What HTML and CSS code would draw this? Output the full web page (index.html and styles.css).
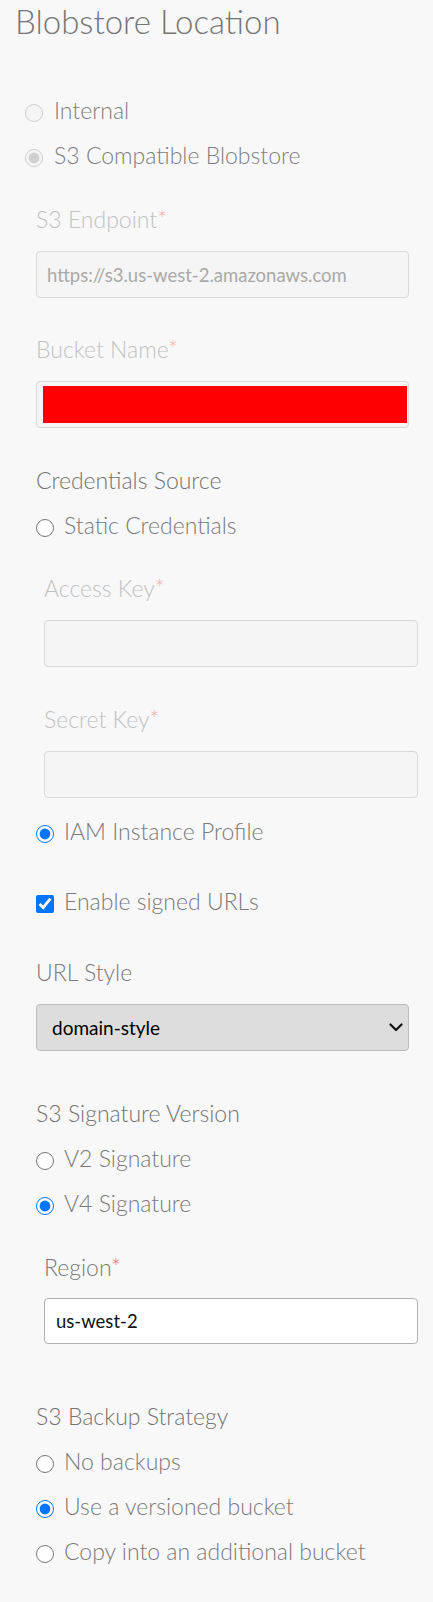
FILE: index.html
```html
<!DOCTYPE html>
<html lang="en">
<head>
<meta charset="utf-8">
<title>Blobstore Location</title>
<link rel="stylesheet" href="styles.css">
</head>
<body>
<div class="page">
  <h2 class="title">Blobstore Location</h2>

  <div class="location">
    <label class="choice is-disabled"><input type="radio" name="loc" disabled><span>Internal</span></label>
    <label class="choice is-disabled gap-15"><input type="radio" name="loc" checked disabled><span>S3 Compatible Blobstore</span></label>
  </div>

  <div class="s3">
    <div class="field is-disabled">
      <label class="field-label">S3 Endpoint<span class="req">*</span></label>
      <input class="text-input" type="text" value="https://s3.us-west-2.amazonaws.com" disabled>
    </div>

    <div class="field is-disabled gap-36">
      <label class="field-label">Bucket Name<span class="req">*</span></label>
      <div class="redacted-wrap">
        <input class="text-input" type="text" value="" disabled>
        <div class="redacted"></div>
      </div>
    </div>

    <div class="group-label gap-37">Credentials Source</div>
    <label class="choice gap-15"><input type="radio" name="cred"><span>Static Credentials</span></label>

    <div class="sub">
      <div class="field is-disabled gap-33">
        <label class="field-label">Access Key<span class="req">*</span></label>
        <input class="text-input" type="text" disabled>
      </div>
      <div class="field is-disabled gap-37">
        <label class="field-label">Secret Key<span class="req">*</span></label>
        <input class="text-input" type="password" disabled>
      </div>
    </div>

    <label class="choice gap-18"><input type="radio" name="cred" checked><span>IAM Instance Profile</span></label>

    <label class="choice check gap-40"><input type="checkbox" checked><span>Enable signed URLs</span></label>

    <div class="field gap-41">
      <label class="field-label">URL Style</label>
      <div class="select-wrap">
        <select class="select-input">
          <option selected>domain-style</option>
          <option>path-style</option>
        </select>
        <svg class="select-arrow" width="14" height="9" viewBox="0 0 14 9" aria-hidden="true"><path d="M1.5 1.5 L7 7 L12.5 1.5" fill="none" stroke="#111" stroke-width="2.2" stroke-linecap="round" stroke-linejoin="round"/></svg>
      </div>
    </div>

    <div class="group-label gap-47">S3 Signature Version</div>
    <label class="choice gap-15"><input type="radio" name="sig"><span>V2 Signature</span></label>
    <label class="choice gap-15"><input type="radio" name="sig" checked><span>V4 Signature</span></label>

    <div class="sub">
      <div class="field region gap-34">
        <label class="field-label">Region<span class="req req-strong">*</span></label>
        <input class="text-input is-active" type="text" value="us-west-2">
      </div>
    </div>

    <div class="group-label gap-57">S3 Backup Strategy</div>
    <label class="choice gap-15"><input type="radio" name="bk"><span>No backups</span></label>
    <label class="choice gap-15"><input type="radio" name="bk" checked><span>Use a versioned bucket</span></label>
    <label class="choice gap-15"><input type="radio" name="bk"><span>Copy into an additional bucket</span></label>
  </div>
</div>
</body>
</html>
```
FILE: styles.css
```css
html, body {
  margin: 0;
  padding: 0;
  background: #f8f8f8;
}

body {
  font-family: "Lato", "Source Sans Pro", "Liberation Sans", sans-serif;
  font-weight: 300;
  color: #7a7a7a;
}

.page {
  padding-top: 1px;
  padding-bottom: 40px;
}

.title {
  margin: 0 0 0 15px;
  font-size: 33px;
  line-height: 40px;
  font-weight: 300;
  color: #757575;
}

.location {
  margin: 54px 0 0 25px;
}

.choice {
  display: flex;
  align-items: flex-start;
  height: 30px;
  font-size: 23px;
  line-height: 30px;
  white-space: nowrap;
}

.choice input {
  flex: none;
  width: 18px;
  height: 18px;
  margin: 8.5px 10px 0 0;
}

.location .choice input {
  margin-right: 11px;
}

.choice.check input {
  margin-top: 9px;
  accent-color: #0075ff;
}

.choice.is-disabled {
  color: #7e7e7e;
}

.s3 {
  margin: 34px 0 0 36px;
  width: 373px;
}

.sub {
  margin-left: 8px;
  width: 374px;
}

.field-label {
  display: block;
  font-size: 23px;
  line-height: 30px;
  margin-bottom: 17px;
  color: #7a7a7a;
}

.field.is-disabled .field-label {
  color: #c2c2c2;
}

.req {
  color: #e86a6a;
}

.field.is-disabled .req {
  color: #f4abab;
}

.group-label {
  font-size: 23px;
  line-height: 30px;
  color: #737373;
}

.text-input {
  display: block;
  box-sizing: border-box;
  width: 100%;
  height: 47px;
  margin: 0;
  padding: 0 10px;
  border: 1px solid #d9d9d9;
  border-radius: 4px;
  background: #f5f5f5;
  font-family: "Lato", sans-serif;
  font-weight: 400;
  font-size: 18.5px;
  color: #a9a9a9;
  outline: none;
}

.text-input.is-active {
  background: #ffffff;
  border-color: #b3b3b3;
  color: #111111;
  padding-left: 11px;
}

.region .field-label {
  margin-bottom: 16px;
}

.region .text-input {
  height: 46px;
}

.redacted-wrap {
  position: relative;
}

.redacted {
  position: absolute;
  left: 7px;
  right: 2px;
  top: 5px;
  bottom: 5px;
  background: #ff0000;
}

.select-wrap {
  position: relative;
}

.select-input {
  display: block;
  box-sizing: border-box;
  width: 100%;
  height: 47px;
  margin: 0;
  padding: 0 30px 0 15px;
  border: 1px solid #bdbdbd;
  border-radius: 4px;
  background-color: #dddddd;
  font-family: "Lato", sans-serif;
  font-weight: 400;
  font-size: 19px;
  color: #000000;
  -webkit-appearance: none;
  appearance: none;
  outline: none;
}

.select-arrow {
  position: absolute;
  right: 6px;
  top: 19px;
  pointer-events: none;
}

.gap-15 { margin-top: 15px; }
.gap-18 { margin-top: 18px; }
.gap-33 { margin-top: 33px; }
.gap-34 { margin-top: 34px; }
.gap-36 { margin-top: 36px; }
.gap-37 { margin-top: 37px; }
.gap-40 { margin-top: 40px; }
.gap-41 { margin-top: 41px; }
.gap-47 { margin-top: 47px; }
.gap-57 { margin-top: 57px; }
```
